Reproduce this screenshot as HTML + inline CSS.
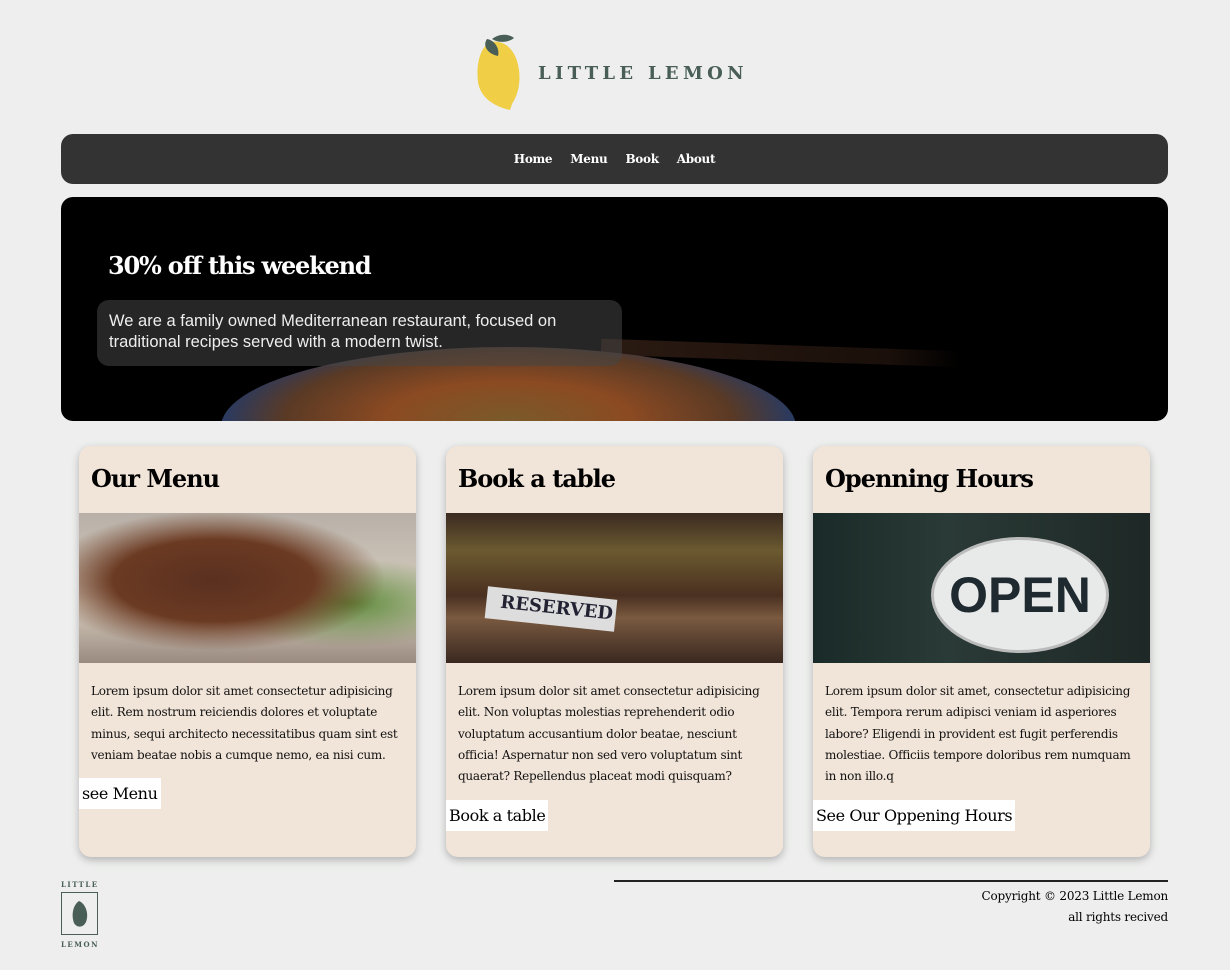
<!DOCTYPE html>
<html><head><meta charset="utf-8"><style>
*{margin:0;padding:0;box-sizing:border-box}
body{width:1230px;height:970px;background:#edeeed;font-family:"DejaVu Serif","Liberation Serif",serif;position:relative;overflow:hidden}
.logo{position:absolute;left:476px;top:34px}
.logotxt{position:absolute;left:538px;top:63px;font-family:"DejaVu Serif",serif;font-weight:bold;font-size:18px;letter-spacing:4.3px;color:#495e57}
nav{position:absolute;left:61px;top:134px;width:1107px;height:50px;background:#333;border-radius:12px;text-align:center;padding-top:14px}
nav a{color:#fff;font-weight:bold;font-size:12px;margin:0 9px;text-decoration:none;letter-spacing:-0.3px}
.hero{position:absolute;left:61px;top:197px;width:1107px;height:224px;border-radius:12px;overflow:hidden;background:#000}
.bowl{position:absolute;left:160px;top:150px;width:575px;height:160px;border-radius:50%;background:radial-gradient(ellipse at 50% 45%,#7a5a2a 0%,#8b4a22 30%,#5a3a25 55%,#2a3a60 70%,#101010 90%)}
.stick{position:absolute;left:540px;top:148px;width:360px;height:16px;background:linear-gradient(90deg,#2a1a12,#1a0f0a 80%,transparent);transform:rotate(2deg)}
.hero h1{position:absolute;left:47px;top:54px;color:#fff;font-size:24px;font-weight:bold;letter-spacing:-1.2px}
.hero .box{position:absolute;left:36px;top:103px;width:525px;height:66px;border-radius:12px;background:rgba(70,70,70,.55);color:#eee;font-family:"Liberation Sans",sans-serif;font-size:16.5px;line-height:21px;padding:11px 12px}
.card{position:absolute;top:446px;width:337px;height:411px;background:#f1e4d8;border-radius:12px;box-shadow:0 3px 8px rgba(0,0,0,.25);overflow:hidden}
.card h2{position:absolute;left:12px;top:18px;font-size:24px;font-weight:bold;color:#000;letter-spacing:-1px}
.img{position:absolute;left:0;top:67px;width:337px;height:150px}
.card p{position:absolute;left:12px;top:235px;width:318px;font-size:12px;line-height:21.3px;color:#111;letter-spacing:-0.25px}
.btn{position:absolute;left:0;background:#fff;font-size:16px;padding:6px 3px 6px 3px;color:#000;letter-spacing:-0.4px}
.foot{position:absolute;left:614px;top:880px;width:554px;border-top:2px solid #222;text-align:right;font-size:12px;line-height:21px;padding-top:4px;letter-spacing:-0.2px}
</style></head><body>
<svg class="logo" width="50" height="78" viewBox="0 0 50 78">
<path d="M14 8 C4 14 0 30 2 48 C4 62 16 72 34 76 L36 70 C44 58 46 40 40 24 C35 12 26 6 14 8Z" fill="#f0ce45"/>
<path d="M11 5 C6 12 12 20 22 22 C24 14 18 6 11 5Z" fill="#495e57"/>
<path d="M16 5 C22 0 32 -1 38 4 C32 9 22 9 16 5Z" fill="#495e57"/>
</svg>
<div class="logotxt">LITTLE LEMON</div>
<nav><a>Home</a><a>Menu</a><a>Book</a><a>About</a></nav>
<div class="hero"><div class="stick"></div><div class="bowl"></div>
<h1>30% off this weekend</h1>
<div class="box">We are a family owned Mediterranean restaurant, focused on traditional recipes served with a modern twist.</div></div>

<div class="card" style="left:79px"><h2>Our Menu</h2>
<div class="img" style="background:radial-gradient(ellipse at 40% 45%,#5a3020 0%,#6b3a22 35%,transparent 60%),radial-gradient(ellipse at 80% 60%,#5d8a3a 0%,transparent 35%),linear-gradient(180deg,#b8b0a8,#d8cfc0 60%,#9a8a80)"></div>
<p>Lorem ipsum dolor sit amet consectetur adipisicing elit. Rem nostrum reiciendis dolores et voluptate minus, sequi architecto necessitatibus quam sint est veniam beatae nobis a cumque nemo, ea nisi cum.</p>
<div class="btn" style="top:332px">see Menu</div></div>

<div class="card" style="left:446px"><h2>Book a table</h2>
<div class="img" style="background:linear-gradient(180deg,#3a2a20 0%,#6b5a30 25%,#4a3020 55%,#7a5a40 70%,#3a2820 100%)"><div style="position:absolute;left:40px;top:80px;width:130px;height:32px;background:#ddd;transform:rotate(6deg);font-weight:bold;color:#223;font-size:18px;padding:4px 14px">RESERVED</div></div>
<p>Lorem ipsum dolor sit amet consectetur adipisicing elit. Non voluptas molestias reprehenderit odio voluptatum accusantium dolor beatae, nesciunt officia! Aspernatur non sed vero voluptatum sint quaerat? Repellendus placeat modi quisquam?</p>
<div class="btn" style="top:354px">Book a table</div></div>

<div class="card" style="left:813px"><h2>Openning Hours</h2>
<div class="img" style="background:linear-gradient(90deg,#1a2a28,#2a3a36 40%,#1e2826)"><div style="position:absolute;left:118px;top:24px;width:178px;height:116px;border-radius:50%;background:#e8eaea;border:3px solid #bbb;font-family:'Liberation Sans',sans-serif;font-weight:bold;font-size:50px;color:#1e2a30;text-align:center;line-height:110px">OPEN</div></div>
<p>Lorem ipsum dolor sit amet, consectetur adipisicing elit. Tempora rerum adipisci veniam id asperiores labore? Eligendi in provident est fugit perferendis molestiae. Officiis tempore doloribus rem numquam in non illo.q</p>
<div class="btn" style="top:354px">See Our Oppening Hours</div></div>

<div style="position:absolute;left:61px;top:880px;font-size:7px;font-weight:bold;letter-spacing:1.5px;color:#495e57">LITTLE</div>
<div style="position:absolute;left:61px;top:892px;width:37px;height:43px;border:1px solid #495e57"></div>
<svg style="position:absolute;left:71px;top:899px" width="18" height="30" viewBox="0 0 18 30"><path d="M8 2 C2 6 0 16 3 24 C6 29 12 29 15 23 C18 15 15 5 8 2Z" fill="#495e57"/></svg>
<div style="position:absolute;left:61px;top:940px;font-size:7px;font-weight:bold;letter-spacing:1.5px;color:#495e57">LEMON</div>
<div class="foot">Copyright © 2023 Little Lemon<br>all rights recived</div>
</body></html>
